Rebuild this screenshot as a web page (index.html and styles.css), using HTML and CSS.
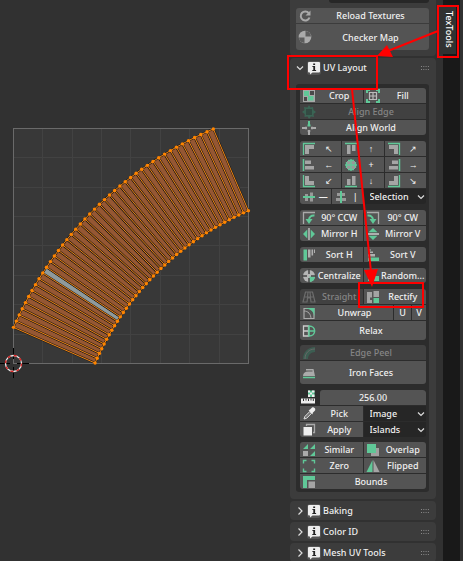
FILE: index.html
```html
<!DOCTYPE html>
<html lang="en">
<head>
<meta charset="utf-8">
<title>UV Editor – TexTools</title>
<link rel="stylesheet" href="styles.css">
</head>
<body>
<svg class="symbols" aria-hidden="true">
  <symbol id="info" viewBox="0 0 14 14"><rect width="14" height="14" rx="3" fill="#545454"/><path d="M2 1h10a1 1 0 0 1 1 1v8.500a1 1 0 0 1-1 1H5.500L3 13.500v-2H2a1 1 0 0 1-1-1V2a1 1 0 0 1 1-1z" fill="#eee"/><path d="M6.200 2.500h1.900v1.600H6.200zM5.400 5h2.700v4h1v1.100H5.300V9h1V6.100h-.9z" fill="#222"/></symbol>
  <symbol id="reload" viewBox="0 0 14 14"><path d="M10.800 4.200A4.500 4.500 0 1 0 11.500 8.500" fill="none" stroke="#aaa" stroke-width="2"/><path d="M12.500 1.500v5h-5z" fill="#aaa"/></symbol>
  <symbol id="checker" viewBox="0 0 14 14"><circle cx="7" cy="7" r="6.300" fill="#aaa"/><path d="M7.500 6.500V1a6 6 0 0 1 5.500 5.500zM6.500 7.500V13A6 6 0 0 1 1 7.500z" fill="#5c5c5c"/></symbol>
  <symbol id="crop" viewBox="0 0 14 14"><path d="M1 1h12v12H1z" fill="#a8a8a8"/><path d="M2 2h5v5H2z" fill="#60c898"/><path d="M8 2h4v4H8zM2 8h3v4H2z" fill="#4a4a4a"/><path d="M6 7h5.500v4.500H6z" fill="#60c898"/></symbol>
  <symbol id="fill" viewBox="0 0 14 14"><path d="M1 4V1h3M10 1h3v3M13 10v3h-3M4 13H1v-3" fill="none" stroke="#60c898" stroke-width="2"/><path d="M3.500 3.500h7v7h-7zM7 3v8M3 7h8" fill="none" stroke="#bbb" stroke-width="1.200"/></symbol>
  <symbol id="alignedge" viewBox="0 0 14 14"><path d="M7 0l1.500 2.500L11 2l.5 3L14 7l-2.500 2 .5 3-3-.5L7 14l-1.500-2.500L2.500 12l.2-3L0 7l2.500-2L2 2l3.500.5z" fill="#3a6454"/><path d="M4 4h6v6H4z" fill="#334a42"/></symbol>
  <symbol id="alignworld" viewBox="0 0 14 14"><path d="M7 0v5M5.500 4.500h3" stroke="#60c898" stroke-width="2"/><path d="M0 7h5M9 7h5M7 9v5" stroke="#aaa" stroke-width="2"/><path d="M4 5.500v3M10 5.500v3M5.500 10h3" stroke="#aaa"/></symbol>
  <symbol id="tl" viewBox="0 0 14 14"><path d="M1.500 13V1.500H13" fill="none" stroke="#60c898" stroke-width="1.300"/><path d="M3 3h9v4H7v5H3z" fill="#a5a5a5"/></symbol>
  <symbol id="tc" viewBox="0 0 14 14"><path d="M1 1.500h12" stroke="#60c898" stroke-width="1.500"/><path d="M3 3h3.500v9H3zM8 3h3.500v6H8z" fill="#a5a5a5"/></symbol>
  <symbol id="tr" viewBox="0 0 14 14"><path d="M1 1.500h11.500V13" fill="none" stroke="#60c898" stroke-width="1.300"/><path d="M2 3h9v9H7V7H2z" fill="#a5a5a5"/></symbol>
  <symbol id="cl" viewBox="0 0 14 14"><path d="M1.500 1v12" stroke="#60c898" stroke-width="1.500"/><path d="M3 2.500h6V6H3zM3 8h9v3.500H3z" fill="#a5a5a5"/></symbol>
  <symbol id="cc" viewBox="0 0 14 14"><path d="M3 3h8v8H3z" fill="#999"/><path d="M7 1v12M1 7h12M4 2.500h6M4 11.500h6M2.500 4v6M11.500 4v6" fill="none" stroke="#60c898" stroke-width="1.300"/></symbol>
  <symbol id="cr" viewBox="0 0 14 14"><path d="M12.500 1v12" stroke="#60c898" stroke-width="1.500"/><path d="M5 2.500h6V6H5zM2 8h9v3.500H2z" fill="#a5a5a5"/></symbol>
  <symbol id="bl" viewBox="0 0 14 14"><path d="M1.500 1v11.500H13" fill="none" stroke="#60c898" stroke-width="1.300"/><path d="M3 2h4v5h5v4H3z" fill="#a5a5a5"/></symbol>
  <symbol id="bc" viewBox="0 0 14 14"><path d="M1 12.500h12" stroke="#60c898" stroke-width="1.500"/><path d="M3 5h3.500v6H3zM8 2h3.500v9H8z" fill="#a5a5a5"/></symbol>
  <symbol id="br" viewBox="0 0 14 14"><path d="M1 12.500h11.500V1" fill="none" stroke="#60c898" stroke-width="1.300"/><path d="M7 2h4v9H2V7h5z" fill="#a5a5a5"/></symbol>
  <symbol id="midh" viewBox="0 0 14 14"><path d="M3 4h3v7H3zM8 2.500h3v9H8z" fill="#999"/><path d="M1 7h12" stroke="#60c898" stroke-width="2"/></symbol>
  <symbol id="midv" viewBox="0 0 14 14"><path d="M3 3h8v3H3zM2 8h10v3H2z" fill="#999"/><path d="M7 1v12" stroke="#60c898" stroke-width="2"/></symbol>
  <symbol id="ccw" viewBox="0 0 14 14"><path d="M1.500 13V1.500H13" fill="none" stroke="#aaa" stroke-width="1.300"/><path d="M12.500 4.500C9 4 7 6.500 7 9" fill="none" stroke="#60c898" stroke-width="2"/><path d="M3.500 8h7L7 13z" fill="#60c898"/></symbol>
  <symbol id="cw" viewBox="0 0 14 14"><path d="M1 1.500h11.500V13" fill="none" stroke="#aaa" stroke-width="1.300"/><path d="M1.500 4.500C5 4 7 6.500 7 9" fill="none" stroke="#60c898" stroke-width="2"/><path d="M3.500 8h7L7 13z" fill="#60c898"/></symbol>
  <symbol id="mirh" viewBox="0 0 14 14"><path d="M7 1v12" stroke="#ccc" stroke-width="1.300"/><path d="M5.300 2.500v9L1 7zM8.700 2.500v9L13 7z" fill="#60c898"/></symbol>
  <symbol id="mirv" viewBox="0 0 14 14"><path d="M1 7h12" stroke="#ccc" stroke-width="1.300"/><path d="M2.500 5.300h9L7 1zM2.500 8.700h9L7 13z" fill="#60c898"/></symbol>
  <symbol id="sorth" viewBox="0 0 14 14"><path d="M1.500 1.500H5v11H1.500z" fill="#60c898"/><path d="M6 1.500h2.500v8H6zM9.500 1.500h1.600v6H9.500zM12 1.500h1v3.500h-1z" fill="#b0b0b0"/></symbol>
  <symbol id="sortv" viewBox="0 0 14 14"><path d="M2 9.500h11V13H2z" fill="#60c898"/><path d="M2 6h7v2.500H2zM2 3.500h5V5H2zM2 1.500h3v1H2z" fill="#b0b0b0"/></symbol>
  <symbol id="central" viewBox="0 0 14 14"><circle cx="7" cy="7" r="6" fill="#b5b5b5"/><path d="M7.500 7.500h5.500A6 6 0 0 1 7.500 13z" fill="#60c898"/><path d="M7 0v5M7 9v5M0 7h5M9 7h5" stroke="#444" stroke-width="1.500"/></symbol>
  <symbol id="random" viewBox="0 0 14 14"><path d="M1 5l6-3 2 5-6 3z" fill="#aaa"/><path d="M2 8h4v4H2zM8 7h5v5H8z" fill="#60c898"/></symbol>
  <symbol id="straight" viewBox="0 0 14 14"><path d="M3.500 2h7l2.500 10H9l-.5-4h-3L5 12H1zM2.500 7h9M6 2l-.5 5M8 2l.5 5" fill="none" stroke="#6c6c6c" stroke-width="1.200"/></symbol>
  <symbol id="rectify" viewBox="0 0 14 14"><path d="M1 2h5v11H1zM7.500 1H13v6H7.500z" fill="#a4a4a4"/><path d="M4 7.500h3V10H4z" fill="#555"/><path d="M7.500 8H13v5H7.500z" fill="#60c898"/></symbol>
  <symbol id="unwrap" viewBox="0 0 14 14"><path d="M2 12.500v-10h10v10z" fill="none" stroke="#aaa" stroke-width="1.200"/><path d="M3 2h9.500v9C12 6 9 3 3 2z" fill="#60c898"/><path d="M2 5c4 0 7 3 7 8" fill="none" stroke="#aaa"/></symbol>
  <symbol id="relax" viewBox="0 0 14 14"><path d="M6.500 2H1.500v10h5zM1 7h5.500" fill="none" stroke="#ccc" stroke-width="1.300"/><path d="M7 2c7.500 0 7.500 10 0 10zM7 7h5.500" fill="none" stroke="#60c898" stroke-width="1.500"/></symbol>
  <symbol id="peel" viewBox="0 0 14 14"><path d="M1 13C1 6 6 1 13 1v5C9 6 6 9 6 13z" fill="#3c5d51"/><path d="M3 13C3 7 7 3 13 3" fill="none" stroke="#686868"/></symbol>
  <symbol id="iron" viewBox="0 0 14 14"><path d="M4 3h7.500l1.500 7H1c0-3 2-4.500 5-4.500h4.500V4.500H4z" fill="#aaa"/><path d="M1 11.500h12" stroke="#60c898" stroke-width="1.500"/></symbol>
  <symbol id="texel" viewBox="0 0 14 14"><path d="M0 8.500h14v5H0z" fill="#eee"/><path d="M2.500 8.500v2.500M5 8.500v2M7.500 8.500v2.500M10 8.500v2M12.300 8.500v2.500" stroke="#333"/><path d="M7 .5h6.500v6.500H7z" fill="#60c898"/><path d="M7 .5h2v2H7zM11 .5h2.500v2H11zM9 2.500h2v2H9zM7 4.500h2V7H7zM11 4.500h2.500V7H11z" fill="#eee"/></symbol>
  <symbol id="pick" viewBox="0 0 14 14"><path d="M2 12l.8-2.500 5-5 1.800 1.800-5 5z" fill="#777" stroke="#ddd"/><path d="M6.500 3l1.300-.3 2-2c2-1.500 4.500 1 3 3l-2 2L10.500 7.500z" fill="#eee"/></symbol>
  <symbol id="apply" viewBox="0 0 14 14"><path d="M4.500 3V1.500h8v8H11" fill="none" stroke="#aaa" stroke-width="1.300"/><path d="M1.500 4H10v8.500H1.500z" fill="#eee"/></symbol>
  <symbol id="similar" viewBox="0 0 14 14"><path d="M6 1v5H1zM13 1v5H8zM13 8v5H8z" fill="#60c898"/><path d="M1 8h5v5H1z" fill="#aaa"/></symbol>
  <symbol id="overlap" viewBox="0 0 14 14"><path d="M5 5h8v8H5z" fill="#a0a0a0"/><path d="M1 1h9v9H1z" fill="#60c898"/></symbol>
  <symbol id="zero" viewBox="0 0 14 14"><path d="M1.500 4.500v-3h3M9.500 1.500h3v3M12.500 9.500v3h-3M4.500 12.500h-3v-3" fill="none" stroke="#60c898" stroke-width="1.400"/></symbol>
  <symbol id="flipped" viewBox="0 0 14 14"><path d="M6.500 1v12H.5z" fill="#60c898"/><path d="M7.500 1v12h6z" fill="#a5a5a5"/></symbol>
  <symbol id="bounds" viewBox="0 0 14 14"><path d="M1 1h12v4H5v8H1z" fill="#60c898"/><path d="M6.500 6.500H13V13H6.500z" fill="#a5a5a5"/></symbol>
  <symbol id="down" viewBox="0 0 10 10"><path d="M2 3.500L5 6.500l3-3" fill="none" stroke="#ddd" stroke-width="1.200"/></symbol>
  <symbol id="right" viewBox="0 0 10 10"><path d="M3.500 1.500L7 5 3.500 8.500" fill="none" stroke="#ddd" stroke-width="1.200"/></symbol>
  <symbol id="grip" viewBox="0 0 10 6"><path d="M1 1.500h8M1 4.500h8" stroke="#888" stroke-dasharray="1 1.300"/></symbol>
</svg>

<div class="editor">
  <main class="viewport">
    <svg class="uv" id="uv" viewBox="0 0 290 561" role="img" aria-label="UV layout">
      <rect x="13.500" y="128.500" width="235" height="235" fill="#383838"/>
      <path class="grid" d="M42.500 128v235M72.500 128v235M101.500 128v235M130.500 128v235M160.500 128v235M189.500 128v235M219.500 128v235M13 157.500h235M13 187.500h235M13 216.500h235M13 245.500h235M13 275.500h235M13 304.500h235M13 334.500h235"/>
      <rect class="frame" x="13.500" y="128.500" width="235" height="235"/>
      <g id="island"></g>
      <path d="M0 363.500h10M17 363.500h12M13.500 348v11M13.500 367v11" stroke="#000"/>
      <circle cx="13.500" cy="363.500" r="8" fill="none" stroke="#eee" stroke-width="1.300"/>
      <circle cx="13.500" cy="363.500" r="8" fill="none" stroke="#d22" stroke-width="1.300" stroke-dasharray="3.140 3.140"/>
    </svg>
  </main>

  <aside class="sidebar">
    <section class="panel top">
      <div class="cut"></div>
      <div class="group">
        <button class="btn"><svg><use href="#reload"/></svg><span>Reload Textures</span></button>
        <button class="btn big"><svg><use href="#checker"/></svg><span>Checker Map</span></button>
      </div>
    </section>

    <section class="panel main">
      <h2><svg class="tri"><use href="#down"/></svg><svg class="info"><use href="#info"/></svg><span>UV Layout</span><svg class="grip"><use href="#grip"/></svg></h2>
      <div class="box">
        <div class="group">
          <div class="row two"><button class="btn"><svg><use href="#crop"/></svg><span>Crop</span></button><button class="btn"><svg><use href="#fill"/></svg><span>Fill</span></button></div>
          <button class="btn" disabled><svg><use href="#alignedge"/></svg><span>Align Edge</span></button>
          <button class="btn"><svg><use href="#alignworld"/></svg><span>Align World</span></button>
        </div>
        <div class="group">
          <div class="row three"><button class="btn"><svg><use href="#tl"/></svg><span>↖</span></button><button class="btn"><svg><use href="#tc"/></svg><span>↑</span></button><button class="btn"><svg><use href="#tr"/></svg><span>↗</span></button></div>
          <div class="row three"><button class="btn"><svg><use href="#cl"/></svg><span>←</span></button><button class="btn"><svg><use href="#cc"/></svg><span>+</span></button><button class="btn"><svg><use href="#cr"/></svg><span>→</span></button></div>
          <div class="row three"><button class="btn"><svg><use href="#bl"/></svg><span>↙</span></button><button class="btn"><svg><use href="#bc"/></svg><span>↓</span></button><button class="btn"><svg><use href="#br"/></svg><span>↘</span></button></div>
          <div class="row two">
            <div class="row two"><button class="btn"><svg><use href="#midh"/></svg><span>—</span></button><button class="btn"><svg><use href="#midv"/></svg><span>|</span></button></div>
            <div class="drop"><select aria-label="Align mode"><option>Selection</option></select><svg><use href="#down"/></svg></div>
          </div>
        </div>
        <div class="group">
          <div class="row two"><button class="btn"><svg><use href="#ccw"/></svg><span>90° CCW</span></button><button class="btn"><svg><use href="#cw"/></svg><span>90° CW</span></button></div>
          <div class="row two"><button class="btn"><svg><use href="#mirh"/></svg><span>Mirror H</span></button><button class="btn"><svg><use href="#mirv"/></svg><span>Mirror V</span></button></div>
        </div>
        <div class="group">
          <div class="row two"><button class="btn"><svg><use href="#sorth"/></svg><span>Sort H</span></button><button class="btn"><svg><use href="#sortv"/></svg><span>Sort V</span></button></div>
        </div>
        <div class="group">
          <div class="row two"><button class="btn"><svg><use href="#central"/></svg><span>Centralize</span></button><button class="btn"><svg><use href="#random"/></svg><span>Random...</span></button></div>
        </div>
        <div class="group">
          <div class="row two"><button class="btn" disabled><svg><use href="#straight"/></svg><span>Straight</span></button><button class="btn"><svg><use href="#rectify"/></svg><span>Rectify</span></button></div>
          <div class="row unwrap"><button class="btn"><svg><use href="#unwrap"/></svg><span>Unwrap</span></button><button class="btn"><span>U</span></button><button class="btn"><span>V</span></button></div>
          <button class="btn medium"><svg><use href="#relax"/></svg><span>Relax</span></button>
        </div>
        <div class="group tight">
          <button class="btn" disabled><svg><use href="#peel"/></svg><span>Edge Peel</span></button>
          <button class="btn big"><svg><use href="#iron"/></svg><span>Iron Faces</span></button>
        </div>
        <div class="group">
          <div class="row size"><label for="texel-size"><svg><use href="#texel"/></svg></label><input id="texel-size" type="text" value="256.00" aria-label="Texel size"></div>
          <div class="row two"><button class="btn"><svg><use href="#pick"/></svg><span>Pick</span></button><div class="drop"><select aria-label="Pick from"><option>Image</option></select><svg><use href="#down"/></svg></div></div>
          <div class="row two"><button class="btn"><svg><use href="#apply"/></svg><span>Apply</span></button><div class="drop"><select aria-label="Apply to"><option>Islands</option></select><svg><use href="#down"/></svg></div></div>
        </div>
        <div class="group tight">
          <div class="row two"><button class="btn"><svg><use href="#similar"/></svg><span>Similar</span></button><button class="btn"><svg><use href="#overlap"/></svg><span>Overlap</span></button></div>
          <div class="row two"><button class="btn"><svg><use href="#zero"/></svg><span>Zero</span></button><button class="btn"><svg><use href="#flipped"/></svg><span>Flipped</span></button></div>
          <button class="btn"><svg><use href="#bounds"/></svg><span>Bounds</span></button>
        </div>
      </div>
    </section>

    <section class="panel"><h2><svg class="tri"><use href="#right"/></svg><svg class="info"><use href="#info"/></svg><span>Baking</span><svg class="grip"><use href="#grip"/></svg></h2></section>
    <section class="panel"><h2><svg class="tri"><use href="#right"/></svg><svg class="info"><use href="#info"/></svg><span>Color ID</span><svg class="grip"><use href="#grip"/></svg></h2></section>
    <section class="panel"><h2><svg class="tri"><use href="#right"/></svg><svg class="info"><use href="#info"/></svg><span>Mesh UV Tools</span><svg class="grip"><use href="#grip"/></svg></h2></section>
  </aside>

  <nav class="tabs"><button class="tab">TexTools</button></nav>

  <svg class="notes" viewBox="0 0 463 561" preserveAspectRatio="xMaxYMin meet" aria-hidden="true">
    <g fill="none" stroke="#f00" stroke-width="2">
      <rect x="288" y="56" width="89" height="33"/>
      <rect x="438" y="6" width="20" height="51"/>
      <rect x="359" y="283" width="64" height="24"/>
      <path d="M438 31L388 51M352 89L371 272"/>
    </g>
    <path d="M377 56l10-11 6 12zM372 287l-8-17 14-1z" fill="#f00"/>
  </svg>
</div>
<script src="island.js"></script>
</body>
</html>
```
FILE: styles.css
```css
* { box-sizing: border-box; }
body { margin: 0; background: #313131; color: #f0f0f0; font: 500 9px/15px "Noto Sans", "Open Sans", sans-serif; }
button, input, select { font: inherit; color: inherit; margin: 0; padding: 0; border: 0; border-radius: 0; }
.symbols { position: absolute; width: 0; height: 0; }

.editor { position: relative; display: grid; grid-template-columns: 1fr 146px 17px; column-gap: 7px; padding-right: 3px; height: 100vh; overflow: hidden; }
.viewport { margin-right: -7px; min-width: 0; }
.uv { display: block; width: 100%; }
.grid { stroke: #424242; fill: none; }
.frame { stroke: #6a6a6a; fill: none; }
.cell { fill: #955733; stroke: #1e1a17; stroke-width: 2; }
.edge { fill: none; stroke: #f08410; stroke-width: 1; }
.cell.active { fill: #8f9a9c; }
.vert { fill: #ff8500; }

.sidebar { display: flex; flex-direction: column; gap: 2px; }
.panel { background: #3c3c3c; border-radius: 4px; }
.panel.top { padding: 0 7px 6px 6px; border-radius: 0 0 4px 4px; }
.panel.main { padding-bottom: 7px; }
.cut { height: 3px; margin: 0 0 5px 33px; background: #272727; border-radius: 0 0 3px 3px; }
h2 { display: flex; align-items: center; height: 19px; margin: 0; padding: 0 6px 0 5px; font: inherit; }
h2 span { flex: 1; padding-left: 2px; white-space: nowrap; }
.main h2 { margin-bottom: 7px; }
.tri { width: 10px; height: 10px; margin-right: 2px; }
.info { width: 14px; height: 14px; }
.grip { width: 10px; height: 6px; }

.box { display: flex; flex-direction: column; gap: 6px; margin: 0 7px 0 6px; padding: 4px 3px 3px 4px; background: #2c2c2c; border-radius: 3px; }
.group { display: flex; flex-direction: column; gap: 1px; border-radius: 3px; overflow: hidden; }
.group.tight { margin-top: -1px; }
.row { display: grid; gap: 1px; }
.two { grid-template-columns: 1fr 1fr; }
.three { grid-template-columns: 1fr 1fr 1fr; }
.unwrap { grid-template-columns: 1fr 17px 14px; }
.size { grid-template-columns: 19px 1fr; }
.btn { display: flex; align-items: center; height: 15px; min-width: 0; background: #545454; }
.btn svg { flex: none; width: 14px; height: 14px; margin-left: 2px; }
.btn span { flex: 1; min-width: 0; text-align: center; white-space: nowrap; }
.btn:disabled { background: #414141; color: #858585; }
.btn.medium { height: 19px; }
.btn.big { height: 23px; }
.top .btn.big { height: 26px; }
.drop { position: relative; height: 15px; }
.drop select { display: block; width: 100%; height: 100%; padding-left: 6px; appearance: none; background: #262626; }
.drop svg { position: absolute; right: 0; top: 3px; width: 10px; height: 10px; pointer-events: none; }
.size svg { display: block; width: 14px; height: 14px; margin-left: 1px; }
.size input { width: 100%; min-width: 0; height: 15px; text-align: center; background: #545454; border-radius: 3px 3px 0 0; }

.tabs { background: #191919; padding-top: 5px; }
.tab { width: 13px; height: 49px; writing-mode: vertical-rl; line-height: 13px; background: #303232; color: #fff; }
.notes { position: absolute; inset: 0; width: 100%; height: 100%; pointer-events: none; }
```
FILE: island.js
```js
// Builds a curved strip of UV quads between two concentric arcs.
const centre = { x: 364, y: 480.5 };
const outer = 382.5, inner = 293.5;
const start = 23.6, end = 66.8, count = 42, active = 9;

const at = (radius, i) => {
  const a = (start + (end - start) * i / count) * Math.PI / 180;
  return [centre.x - radius * Math.cos(a), centre.y - radius * Math.sin(a)].map(v => v.toFixed(2));
};

let cells = '', edges = '', verts = '';
for (let i = 0; i < count; i++) {
  const quad = [at(outer, i), at(outer, i + 1), at(inner, i + 1), at(inner, i)].join(' ');
  cells += `<polygon class="cell${i === active ? ' active' : ''}" points="${quad}"/>`;
}
for (let i = 0; i <= count; i++) {
  edges += `<polyline class="edge" points="${at(outer, i)} ${at(inner, i)}"/>`;
  for (const r of [outer, inner]) {
    const [x, y] = at(r, i);
    verts += `<circle class="vert" cx="${x}" cy="${y}" r="1.7"/>`;
    if (i < count) edges += `<polyline class="edge" points="${at(r, i)} ${at(r, i + 1)}"/>`;
  }
}
document.getElementById('island').innerHTML = cells + edges + verts;
```
